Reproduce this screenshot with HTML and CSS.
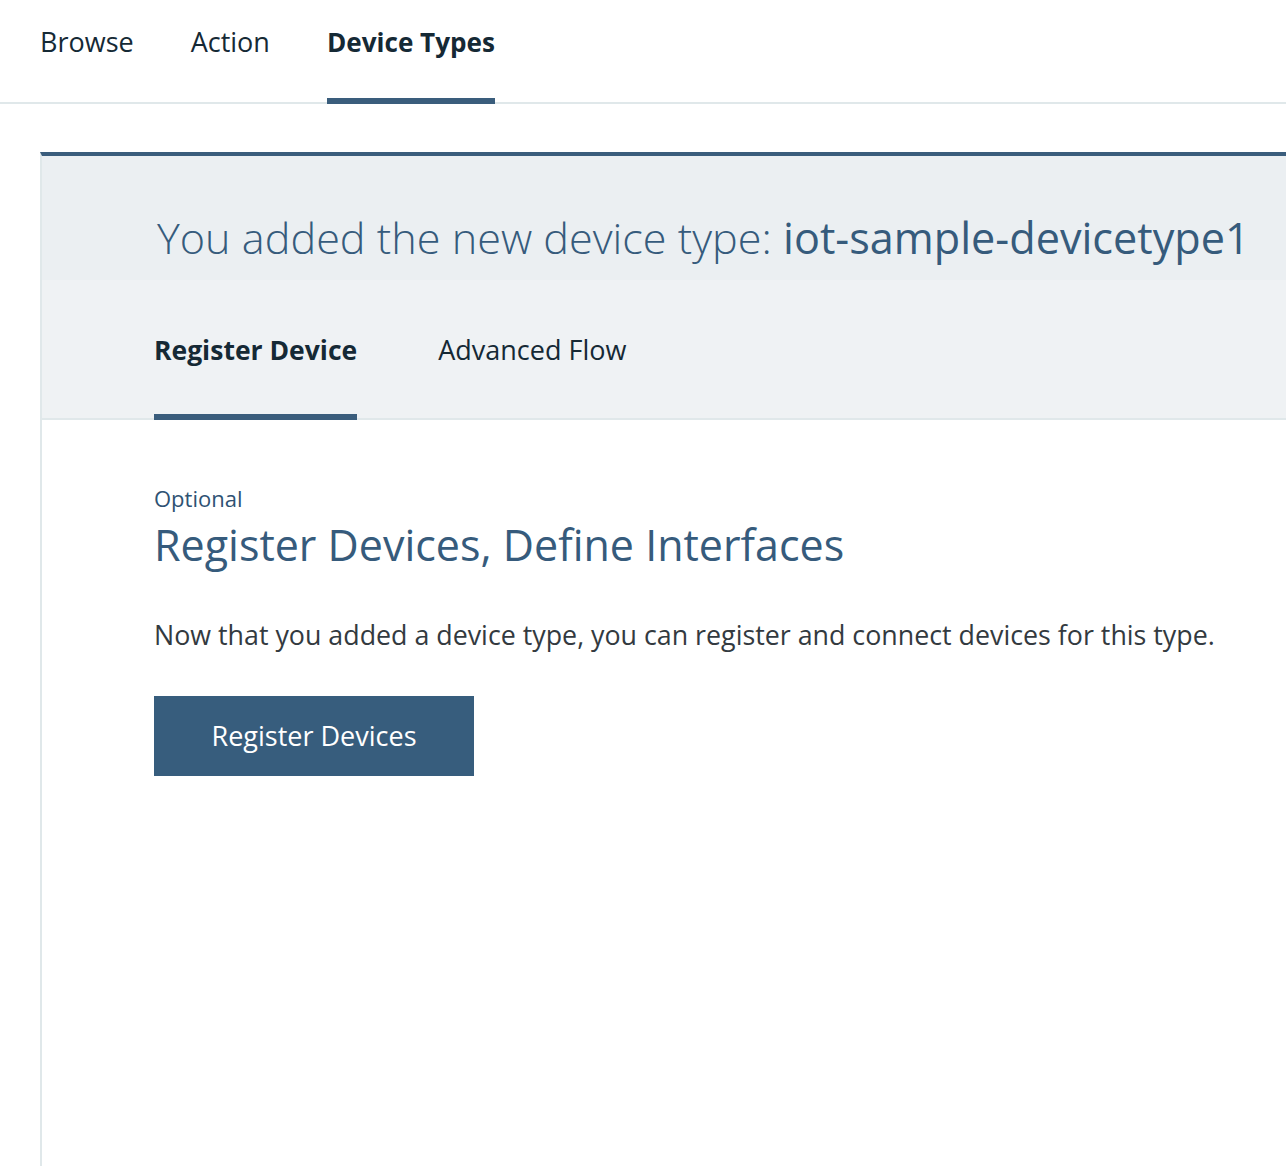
FILE: index.html
```html
<!DOCTYPE html>
<html lang="en">
<head>
<meta charset="utf-8">
<title>Device Types</title>
<link rel="stylesheet" href="styles.css">
</head>
<body>
<nav class="topnav">
  <a class="topnav-item">Browse</a>
  <a class="topnav-item">Action</a>
  <a class="topnav-item is-active">Device Types</a>
</nav>

<section class="card">
  <header class="card-header">
    <h1 class="card-title"><span class="light">You added the new device type: </span><span class="name">iot-sample-devicetype1</span></h1>
  </header>
  <div class="tabs">
    <a class="tab is-active">Register Device</a>
    <a class="tab">Advanced Flow</a>
  </div>
  <div class="card-body">
    <p class="eyebrow">Optional</p>
    <h2 class="section-title">Register Devices, Define Interfaces</h2>
    <p class="lead">Now that you added a device type, you can register and connect devices for this type.</p>
    <button class="btn-primary" type="button">Register Devices</button>
  </div>
</section>
</body>
</html>
```
FILE: styles.css
```css
html, body {
  margin: 0;
  padding: 0;
  background: #ffffff;
}

body {
  font-family: "Open Sans", "Noto Sans", sans-serif;
  color: #152935;
  min-height: 1166px;
  overflow: hidden;
}

/* top navigation */
.topnav {
  display: flex;
  gap: 57px;
  padding-left: 40px;
  height: 102px;
  border-bottom: 2px solid #e0e8ea;
}

.topnav-item {
  display: block;
  box-sizing: border-box;
  height: 104px;
  margin-bottom: -2px;
  padding-top: 22px;
  font-size: 27px;
  line-height: 40px;
  color: #152935;
  border-bottom: 6px solid transparent;
  cursor: pointer;
}

.topnav-item.is-active {
  font-size: 26.1px;
  font-weight: 700;
  border-bottom-color: #3a5d7c;
}

/* card */
.card {
  margin-top: 48px;
  margin-left: 40px;
  min-height: 1010px;
  border-top: 4px solid #3a5d7c;
  border-left: 2px solid #e0e8ea;
}

.card-header {
  box-sizing: border-box;
  height: 124px;
  padding: 56px 0 0 115px;
  background: #ebeff2;
}

.card-title {
  margin: 0;
  font-size: 43.2px;
  line-height: 52px;
  font-weight: 400;
  color: #365b7c;
  white-space: nowrap;
}

.card-title .light {
  font-weight: 300;
}

/* tabs */
.tabs {
  display: flex;
  gap: 81px;
  padding-left: 112px;
  height: 138px;
  background: #eff2f4;
  border-bottom: 2px solid #e0e8ea;
}

.tab {
  display: block;
  box-sizing: border-box;
  height: 140px;
  margin-bottom: -2px;
  padding-top: 50px;
  font-size: 27px;
  line-height: 40px;
  color: #152935;
  border-bottom: 6px solid transparent;
  cursor: pointer;
}

.tab.is-active {
  font-size: 26.5px;
  font-weight: 700;
  border-bottom-color: #3a5d7c;
}

/* body */
.card-body {
  display: flex;
  flex-direction: column;
  align-items: flex-start;
  padding: 64px 0 0 112px;
}

.eyebrow {
  margin: 0;
  font-size: 22px;
  line-height: 28px;
  color: #2e5273;
}

.section-title {
  margin: 7px 0 0;
  font-size: 43px;
  line-height: 52px;
  font-weight: 400;
  color: #365b7c;
}

.lead {
  margin: 44px 0 0;
  font-size: 26.8px;
  line-height: 40px;
  color: #333a40;
}

.btn-primary {
  margin-top: 41px;
  width: 320px;
  height: 80px;
  padding: 0;
  border: 0;
  border-radius: 0;
  background: #375d7d;
  color: #ffffff;
  font-family: inherit;
  font-size: 27px;
  line-height: 80px;
  cursor: pointer;
}
```
